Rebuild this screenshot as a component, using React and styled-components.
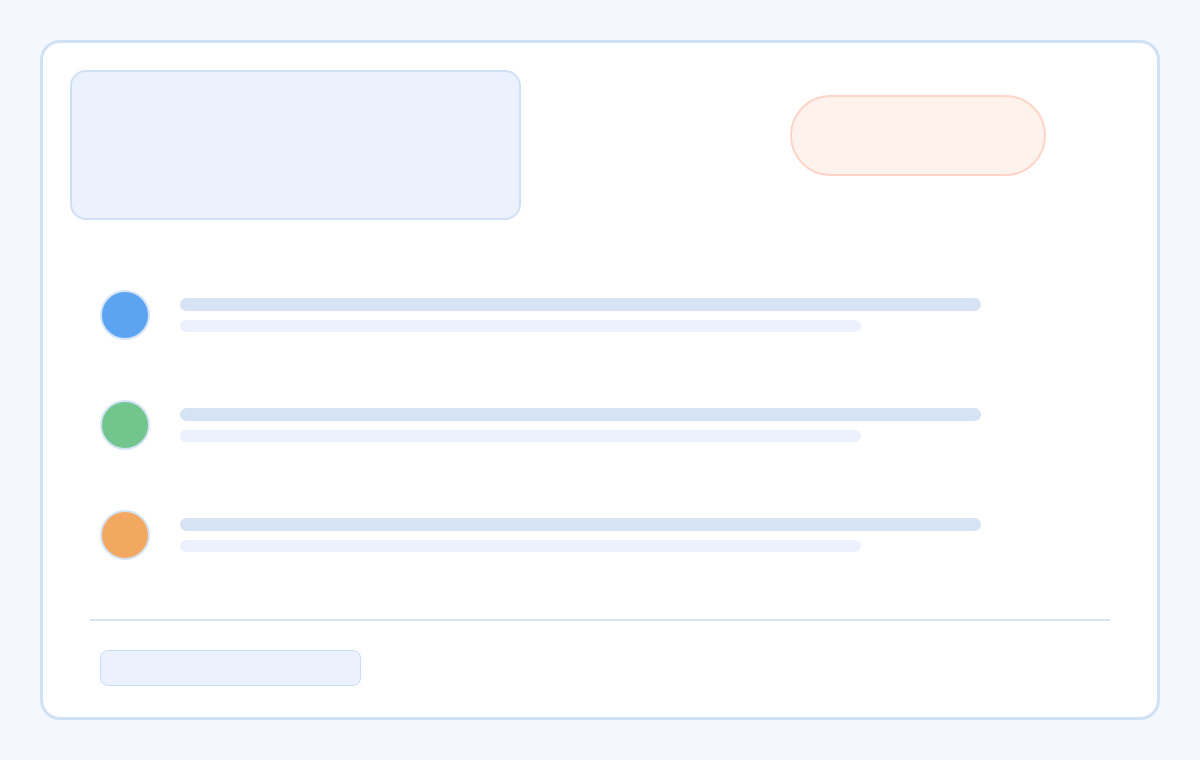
import React from "react";
import styled, { createGlobalStyle } from "styled-components";

const Global = createGlobalStyle`
  * { box-sizing: border-box; }
  body {
    margin: 0;
    background: #f4f7fc;
    font-family: "Inter", "Liberation Sans", sans-serif;
  }
`;

const Page = styled.div`
  width: 1200px;
  height: 760px;
  padding: 40px;
`;

const Card = styled.div`
  width: 1120px;
  height: 680px;
  background: #ffffff;
  border: 3px solid #d0e0f5;
  border-radius: 20px;
  padding: 27px 47px 0 27px;
  display: flex;
  flex-direction: column;
`;

const Header = styled.div`
  display: flex;
  align-items: flex-start;
`;

const Hero = styled.div`
  width: 451px;
  height: 150px;
  background: #ebf2fe;
  border: 2px solid #cfe0f5;
  border-radius: 16px;
`;

const Pill = styled.div`
  width: 256px;
  height: 81px;
  margin-left: 269px;
  margin-top: 25px;
  background: #fef2ed;
  border: 2px solid #fdd4c6;
  border-radius: 41px;
`;

const List = styled.div`
  display: flex;
  flex-direction: column;
  gap: 60px;
  margin-top: 70px;
  padding-left: 30px;
`;

const Row = styled.div`
  display: flex;
  align-items: center;
  gap: 30px;
`;

const Dot = styled.div`
  width: 50px;
  height: 50px;
  border-radius: 50%;
  background: ${(p) => p.$color};
  border: 2px solid #d4e4f7;
  flex-shrink: 0;
`;

const Lines = styled.div`
  display: flex;
  flex-direction: column;
  gap: 9px;
`;

const Line = styled.div`
  width: ${(p) => p.$w}px;
  height: ${(p) => p.$h}px;
  border-radius: 7px;
  background: ${(p) => p.$color};
`;

const Divider = styled.div`
  height: 2px;
  background: #dae3f0;
  margin: 59px 0 0 20px;
  width: 1020px;
`;

const Button = styled.div`
  width: 261px;
  height: 36px;
  margin: 29px 0 0 30px;
  background: #ebf2fe;
  border: 1px solid #c9dcf5;
  border-radius: 8px;
`;

const rows = ["#5ca4f2", "#72c58c", "#f3a862"];

export default function App() {
  return (
    <Page>
      <Global />
      <Card>
        <Header>
          <Hero />
          <Pill />
        </Header>
        <List>
          {rows.map((c) => (
            <Row key={c}>
              <Dot $color={c} />
              <Lines>
                <Line $w={801} $h={13} $color="#d6e3f4" />
                <Line $w={681} $h={12} $color="#ebf2fd" />
              </Lines>
            </Row>
          ))}
        </List>
        <Divider />
        <Button />
      </Card>
    </Page>
  );
}
